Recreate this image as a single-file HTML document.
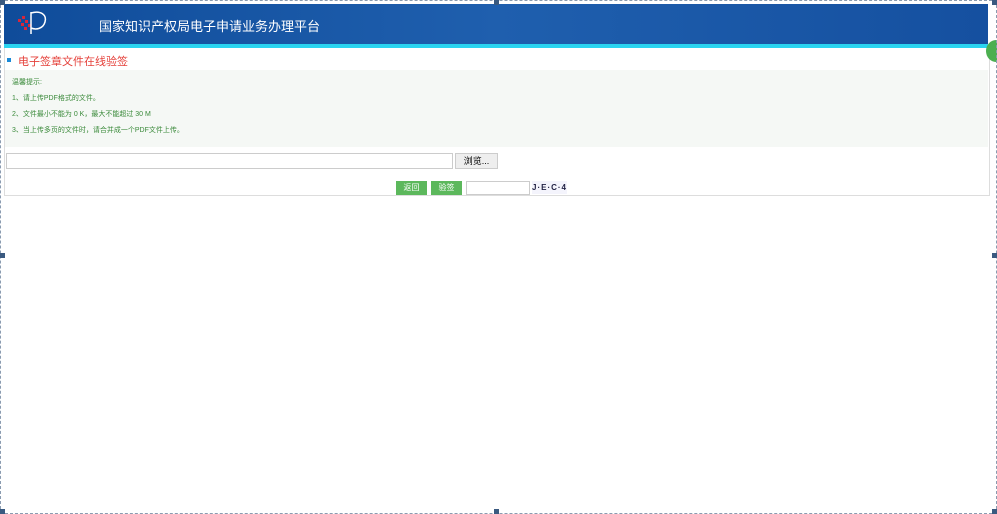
<!DOCTYPE html>
<html><head><meta charset="utf-8"><style>
body{margin:0;width:997px;height:514px;background:#fff;position:relative;overflow:hidden;font-family:"Liberation Sans","Noto Sans CJK SC",sans-serif}
.frame{position:absolute;left:0;top:0;width:995px;height:512px;border:1px dashed #8a9bb0}
.h{position:absolute;width:5px;height:5px;background:#3a5a80}
.hdr{position:absolute;left:4px;top:4px;width:984px;height:40px;background:linear-gradient(90deg,#0f4c9a,#1f5fae 50%,#1550a0)}
.cy{position:absolute;left:4px;top:44px;width:984px;height:4px;background:#2ad4f0}
.ttl{position:absolute;left:99px;top:16px;color:#fff;font-size:13px}
.box{position:absolute;left:4px;top:48px;width:984px;height:147px;border:1px solid #ddd;border-top:none}
.sec{position:absolute;left:18px;top:53px;color:#e5403a;font-size:11px}
.sq{position:absolute;left:7px;top:58px;width:4px;height:4px;background:#1a8ad8}
.hint{position:absolute;left:5px;top:70px;width:983px;height:77px;background:#f5f8f5}
.hint div{position:absolute;left:7px;font-size:7px;color:#3a8a3a}
.btn{position:absolute;top:181px;height:14px;background:#5cb85c;color:#fff;font-size:8px;text-align:center;line-height:14px}
</style></head><body>
<div class="hdr"></div><div class="cy"></div>
<svg style="position:absolute;left:16px;top:9px" width="34" height="28"><g fill="#d9263a"><rect x="2" y="10" width="3" height="3"/><rect x="6" y="7" width="3" height="3"/><rect x="5" y="14" width="3" height="3"/><rect x="9" y="11" width="3" height="3"/><rect x="8" y="18" width="3" height="3"/><rect x="12" y="15" width="3" height="3"/></g><path d="M15 3v22M15 4c10-3 16 2 14 9s-9 8-14 6" stroke="#fff" stroke-width="1.5" fill="none"/></svg>
<div class="ttl">国家知识产权局电子申请业务办理平台</div>
<div class="box"></div>
<div class="sq"></div><div class="sec">电子签章文件在线验签</div>
<div class="hint">
<div style="top:7px">温馨提示:</div>
<div style="top:23px">1、请上传PDF格式的文件。</div>
<div style="top:39px">2、文件最小不能为 0 K，最大不能超过 30 M</div>
<div style="top:55px">3、当上传多页的文件时，请合并成一个PDF文件上传。</div>
</div>
<div style="position:absolute;left:6px;top:153px;width:445px;height:14px;border:1px solid #ccc;background:#fff"></div>
<div style="position:absolute;left:455px;top:153px;width:41px;height:14px;border:1px solid #ccc;background:#eee;font-size:9px;line-height:14px;text-align:center">浏览...</div>
<div class="btn" style="left:396px;width:31px">返回</div>
<div class="btn" style="left:431px;width:31px">验签</div>
<div style="position:absolute;left:466px;top:181px;width:62px;height:12px;border:1px solid #ccc"></div>
<div style="position:absolute;left:532px;top:181px;width:35px;height:13px;background:#f4f4fc;color:#224;font-size:8px;font-weight:bold;line-height:13px;text-align:center;letter-spacing:1px">J·E·C·4</div>
<div style="position:absolute;left:986px;top:40px;width:20px;height:22px;border-radius:50%;background:#4caf50"></div>
<div class="frame"></div>
<div class="h" style="left:0;top:0"></div><div class="h" style="left:494px;top:0"></div><div class="h" style="left:992px;top:0"></div>
<div class="h" style="left:0;top:253px"></div><div class="h" style="left:992px;top:253px"></div>
<div class="h" style="left:0;top:509px"></div><div class="h" style="left:494px;top:509px"></div><div class="h" style="left:992px;top:509px"></div>
</body></html>
